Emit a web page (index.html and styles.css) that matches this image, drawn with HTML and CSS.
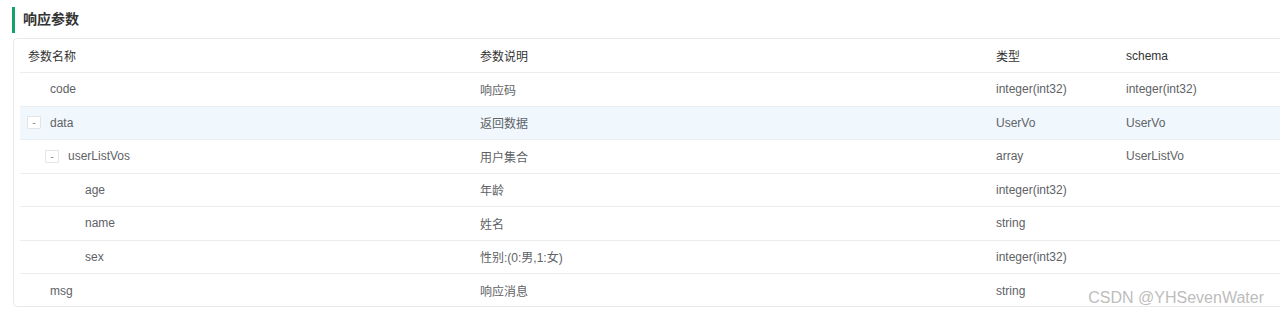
FILE: index.html
```html
<!DOCTYPE html>
<html lang="zh">
<head>
<meta charset="utf-8">
<link rel="stylesheet" href="styles.css">
</head>
<body>
<div class="page">
  <h3 class="title">响应参数</h3>
  <div class="card">
    <div class="table">
      <div class="row head">
        <div class="cell">参数名称</div>
        <div class="cell">参数说明</div>
        <div class="cell">类型</div>
        <div class="cell">schema</div>
      </div>
      <div class="row">
        <div class="cell name l0">code</div>
        <div class="cell">响应码</div>
        <div class="cell">integer(int32)</div>
        <div class="cell">integer(int32)</div>
      </div>
      <div class="row hl">
        <div class="cell name t0"><span class="tog">-</span>data</div>
        <div class="cell">返回数据</div>
        <div class="cell">UserVo</div>
        <div class="cell">UserVo</div>
      </div>
      <div class="row">
        <div class="cell name t1"><span class="tog">-</span>userListVos</div>
        <div class="cell">用户集合</div>
        <div class="cell">array</div>
        <div class="cell">UserListVo</div>
      </div>
      <div class="row">
        <div class="cell name l2">age</div>
        <div class="cell">年龄</div>
        <div class="cell">integer(int32)</div>
        <div class="cell"></div>
      </div>
      <div class="row">
        <div class="cell name l2">name</div>
        <div class="cell">姓名</div>
        <div class="cell">string</div>
        <div class="cell"></div>
      </div>
      <div class="row">
        <div class="cell name l2">sex</div>
        <div class="cell">性别:(0:男,1:女)</div>
        <div class="cell">integer(int32)</div>
        <div class="cell"></div>
      </div>
      <div class="row last">
        <div class="cell name l0">msg</div>
        <div class="cell">响应消息</div>
        <div class="cell">string</div>
        <div class="cell"></div>
      </div>
    </div>
  </div>
  <div class="watermark">CSDN @YHSevenWater</div>
</div>
</body>
</html>
```

FILE: styles.css
```css
html, body {
  margin: 0;
  padding: 0;
  background: #fff;
  overflow: hidden;
}
body {
  width: 1280px;
  height: 312px;
  font-family: "Liberation Sans", Arial, "Noto Sans CJK SC", sans-serif;
  font-size: 12px;
  color: #606266;
}
.page {
  position: relative;
  height: 312px;
  padding: 7px 0 0 12px;
  box-sizing: border-box;
}
.title {
  margin: 0;
  height: 26px;
  line-height: 25px;
  border-left: 3px solid #13a36a;
  padding-left: 8px;
  font-size: 14px;
  font-weight: bold;
  color: #333;
}
.card {
  margin-top: 5px;
  margin-left: 1px;
  width: 1290px;
  height: 269px;
  box-sizing: border-box;
  border: 1px solid #e8e8e8;
  border-radius: 4px;
  padding: 0 0 0 6px;
}
.table {
  display: flex;
  flex-direction: column;
}
.row {
  display: grid;
  grid-template-columns: 452px 516px 130px 1fr;
  height: 33.5px;
  box-sizing: border-box;
  border-bottom: 1px solid #ebeef0;
  align-items: center;
}
.row.head {
  height: 34px;
  color: #333;
  border-bottom: 1px solid #ececec;
}
.row.last {
  border-bottom: none;
}
.row.hl {
  background: #f0f8fe;
}
.cell {
  padding-left: 8px;
  white-space: nowrap;
  display: flex;
  align-items: center;
}
.name.l0 { padding-left: 30px; }
.name.t0 { padding-left: 7px; }
.name.t1 { padding-left: 25px; }
.name.l2 { padding-left: 65px; }
.tog {
  display: inline-flex;
  align-items: center;
  justify-content: center;
  width: 12px;
  height: 11px;
  border: 1px solid #e4e4e4;
  border-radius: 1px;
  color: #888;
  font-size: 11px;
  line-height: 11px;
  margin-right: 9px;
  background: #fff;
}
.watermark {
  position: absolute;
  right: 16px;
  bottom: 5px;
  font-size: 16px;
  color: #bdbdbd;
  text-shadow: 0 0 1px #fff;
}
```
